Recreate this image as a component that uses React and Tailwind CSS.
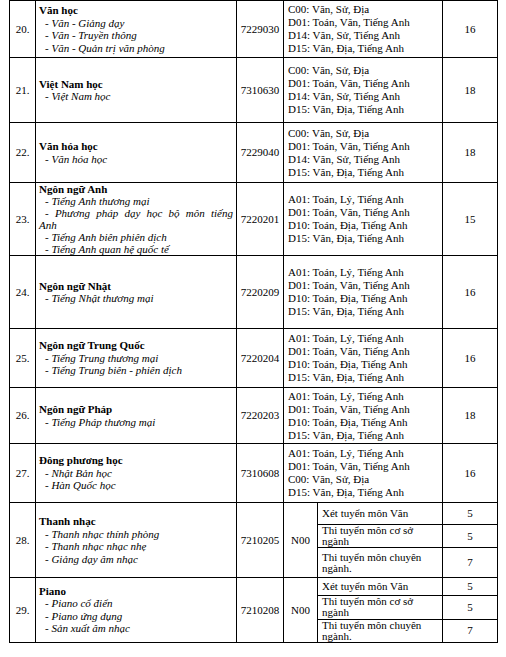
import React from 'react';

const SET_C = ['C00: Văn, Sử, Địa', 'D01: Toán, Văn, Tiếng Anh', 'D14: Văn, Sử, Tiếng Anh', 'D15: Văn, Địa, Tiếng Anh'];
const SET_A = ['A01: Toán, Lý, Tiếng Anh', 'D01: Toán, Văn, Tiếng Anh', 'D10: Toán, Địa, Tiếng Anh', 'D15: Văn, Địa, Tiếng Anh'];

const majors = [
  { n: '20.', title: 'Văn học', subs: ['Văn - Giảng dạy', 'Văn - Truyền thông', 'Văn - Quản trị văn phòng'], code: '7229030', combos: SET_C, score: '16', h: 'h-[57px]' },
  { n: '21.', title: 'Việt Nam học', subs: ['Việt Nam học'], code: '7310630', combos: SET_C, score: '18', h: 'h-[65px]' },
  { n: '22.', title: 'Văn hóa học', subs: ['Văn hóa học'], code: '7229040', combos: SET_C, score: '18', h: 'h-[60px]' },
  { n: '23.', title: 'Ngôn ngữ Anh', subs: ['Tiếng Anh thương mại', 'wrap', 'Tiếng Anh biên phiên dịch', 'Tiếng Anh quan hệ quốc tế'], code: '7220201', combos: SET_A, score: '15', h: 'h-[73px]' },
  { n: '24.', title: 'Ngôn ngữ Nhật', subs: ['Tiếng Nhật thương mại'], code: '7220209', combos: SET_A, score: '16', h: 'h-[73px]' },
  { n: '25.', title: 'Ngôn ngữ Trung Quốc', subs: ['Tiếng Trung thương mại', 'Tiếng Trung biên - phiên dịch'], code: '7220204', combos: SET_A, score: '16', h: 'h-[59px]' },
  { n: '26.', title: 'Ngôn ngữ Pháp', subs: ['Tiếng Pháp thương mại'], code: '7220203', combos: SET_A, score: '18', h: 'h-[56px]' },
  { n: '27.', title: 'Đông phương học', subs: ['Nhật Bản học', 'Hàn Quốc học'], code: '7310608', combos: ['A01: Toán, Lý, Tiếng Anh', 'D01: Toán, Văn, Tiếng Anh', 'C00: Văn, Sử, Địa', 'D15: Văn, Địa, Tiếng Anh'], score: '16', h: 'h-[59px]' },
];

const music = [
  {
    n: '28.', title: 'Thanh nhạc', subs: ['Thanh nhạc thính phòng', 'Thanh nhạc nhạc nhẹ', 'Giảng dạy âm nhạc'], code: '7210205',
    parts: [
      { text: 'Xét tuyển môn Văn', score: '5', h: 'h-[22px]' },
      { text: 'Thi tuyển môn cơ sở ngành', score: '5', h: 'h-[23px]' },
      { text: 'Thi tuyển môn chuyên ngành.', score: '7', h: 'h-[30px]' },
    ],
  },
  {
    n: '29.', title: 'Piano', subs: ['Piano cổ điển', 'Piano ứng dụng', 'Sản xuất âm nhạc'], code: '7210208',
    parts: [
      { text: 'Xét tuyển môn Văn', score: '5', h: 'h-[16px]' },
      { text: 'Thi tuyển môn cơ sở ngành', score: '5', h: 'h-[24px]' },
      { text: 'Thi tuyển môn chuyên ngành.', score: '7', h: 'h-[23px]' },
    ],
  },
];

const cell = 'border border-black p-0 align-middle';

// Tên ngành: dòng đậm + các chuyên ngành in nghiêng
const MajorName = ({ title, subs, tight }) => (
  <div className={`pl-[3px] pr-[3px] text-justify ${tight ? 'leading-[12px]' : 'leading-[12.5px]'}`}>
    <div className="font-bold">{title}</div>
    {subs.map((s) =>
      s === 'wrap' ? (
        <div key={s} className="italic">
          <div className="indent-[6px] [text-align-last:justify]">- Phương pháp dạy học bộ môn tiếng</div>
          <div>Anh</div>
        </div>
      ) : (
        <div key={s} className="italic indent-[6px]">- {s}</div>
      )
    )}
  </div>
);

export default function App() {
  return (
    <div className="min-h-[657px] w-[506px] bg-white font-[family-name:'Liberation_Serif','Times_New_Roman',serif] text-[11px] text-black">
      <table className="ml-[9px] w-[489px] table-fixed border-collapse">
        <colgroup>
          <col className="w-[26px]" />
          <col className="w-[201px]" />
          <col className="w-[47px]" />
          <col className="w-[34px]" />
          <col className="w-[125px]" />
          <col className="w-[55px]" />
        </colgroup>
        <tbody>
          {majors.map((m) => (
            <tr key={m.n} className={m.h}>
              <td className={`${cell} text-center`}>{m.n}</td>
              <td className={cell}>
                <MajorName title={m.title} subs={m.subs} tight={m.n === '23.'} />
              </td>
              <td className={`${cell} text-center`}>{m.code}</td>
              <td colSpan={2} className={`${cell} pl-[4px] leading-[13px]`}>
                {m.combos.map((c) => (
                  <div key={c}>{c}</div>
                ))}
              </td>
              <td className={`${cell} text-center`}>{m.score}</td>
            </tr>
          ))}
          {music.map((m) =>
            m.parts.map((p, i) => (
              <tr key={m.n + i} className={p.h}>
                {i === 0 && (
                  <>
                    <td rowSpan={3} className={`${cell} text-center`}>{m.n}</td>
                    <td rowSpan={3} className={cell}>
                      <MajorName title={m.title} subs={m.subs} />
                    </td>
                    <td rowSpan={3} className={`${cell} text-center`}>{m.code}</td>
                    <td rowSpan={3} className={`${cell} text-center`}>N00</td>
                  </>
                )}
                <td className={`${cell} pl-[4px] leading-[11px]`}>{p.text}</td>
                <td className={`${cell} text-center`}>{p.score}</td>
              </tr>
            ))
          )}
        </tbody>
      </table>
    </div>
  );
}
